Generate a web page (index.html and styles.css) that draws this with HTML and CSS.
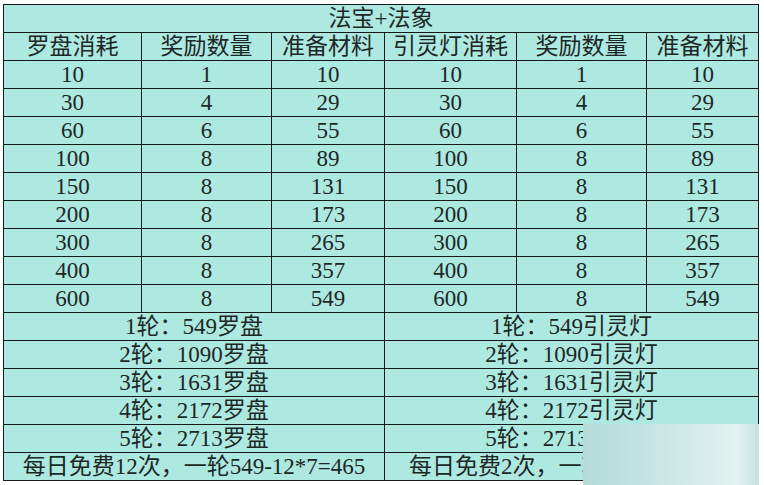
FILE: index.html
```html
<!DOCTYPE html>
<html lang="zh">
<head>
<meta charset="utf-8">
<link rel="stylesheet" href="styles.css">
</head>
<body>
<div class="page">
<table class="tbl">
<colgroup>
<col class="c1"><col class="c2"><col class="c3"><col class="c4"><col class="c5"><col class="c6">
</colgroup>
<tr><td colspan="6">法宝+法象</td></tr>
<tr><td>罗盘消耗</td><td>奖励数量</td><td>准备材料</td><td>引灵灯消耗</td><td>奖励数量</td><td>准备材料</td></tr>
<tr><td>10</td><td>1</td><td>10</td><td>10</td><td>1</td><td>10</td></tr>
<tr><td>30</td><td>4</td><td>29</td><td>30</td><td>4</td><td>29</td></tr>
<tr><td>60</td><td>6</td><td>55</td><td>60</td><td>6</td><td>55</td></tr>
<tr><td>100</td><td>8</td><td>89</td><td>100</td><td>8</td><td>89</td></tr>
<tr><td>150</td><td>8</td><td>131</td><td>150</td><td>8</td><td>131</td></tr>
<tr><td>200</td><td>8</td><td>173</td><td>200</td><td>8</td><td>173</td></tr>
<tr><td>300</td><td>8</td><td>265</td><td>300</td><td>8</td><td>265</td></tr>
<tr><td>400</td><td>8</td><td>357</td><td>400</td><td>8</td><td>357</td></tr>
<tr><td>600</td><td>8</td><td>549</td><td>600</td><td>8</td><td>549</td></tr>
<tr><td colspan="3">1轮：549罗盘</td><td colspan="3">1轮：549引灵灯</td></tr>
<tr><td colspan="3">2轮：1090罗盘</td><td colspan="3">2轮：1090引灵灯</td></tr>
<tr><td colspan="3">3轮：1631罗盘</td><td colspan="3">3轮：1631引灵灯</td></tr>
<tr><td colspan="3">4轮：2172罗盘</td><td colspan="3">4轮：2172引灵灯</td></tr>
<tr><td colspan="3">5轮：2713罗盘</td><td colspan="3">5轮：2713引灵灯</td></tr>
<tr><td colspan="3">每日免费12次，一轮549-12*7=465</td><td colspan="3" class="foot2">每日免费2次，一轮549-2*7=535</td></tr>
</table>
<div class="blur"></div>
</div>
</body>
</html>
```
FILE: styles.css
```css
html, body { margin: 0; padding: 0; background: #ffffff; }
.page {
  position: relative;
  width: 764px;
  height: 485px;
  padding: 4px 0 0 3px;
  box-sizing: border-box;
  overflow: hidden;
}
.tbl {
  border-collapse: collapse;
  table-layout: fixed;
  width: 755px;
  background: #aee9e1;
  font-family: "Liberation Serif", "Noto Sans CJK SC", serif;
  font-size: 23px;
  color: #1d2826;
}
.c1 { width: 138px; }
.c2 { width: 130px; }
.c3 { width: 113px; }
.c4 { width: 132px; }
.c5 { width: 130px; }
.c6 { width: 112px; }
.tbl td {
  border: 1.5px solid #151a19;
  height: 27px;
  padding: 0;
  line-height: 27px;
  text-align: center;
  white-space: nowrap;
  overflow: hidden;
}
.tbl td.foot2 { text-align: left; padding-left: 24px; }
.blur {
  position: absolute;
  left: 583px;
  top: 424px;
  width: 176px;
  height: 61px;
  background: linear-gradient(90deg, #b4dad7 0%, #c7e5e2 40%, #d8eeec 72%, #e4f3f1 88%, #c2e1de 100%);
}
```
